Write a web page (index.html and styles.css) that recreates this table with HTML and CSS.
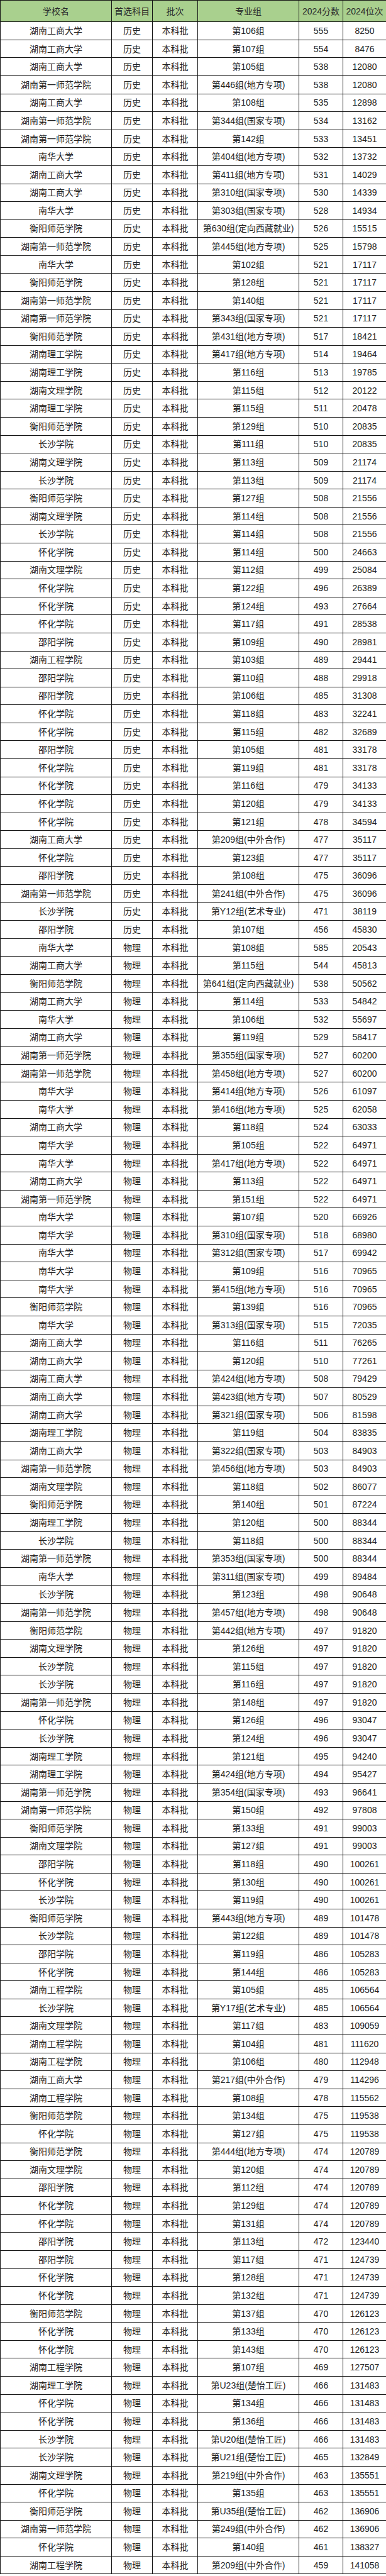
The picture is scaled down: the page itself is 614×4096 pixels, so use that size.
FILE: index.html
```html
<!DOCTYPE html>
<html lang="zh-CN">
<head>
<meta charset="utf-8">
<title>2024 湖南高校录取分数</title>
<link rel="stylesheet" href="styles.css">
</head>
<body>
<table class="score-table">
<colgroup>
<col class="c-school"><col class="c-subject"><col class="c-batch"><col class="c-group"><col class="c-score"><col class="c-rank">
</colgroup>
<thead>
<tr class="head-row"><th>学校名</th><th>首选科目</th><th>批次</th><th>专业组</th><th>2024分数</th><th>2024位次</th></tr>
</thead>
<tbody>
<tr><td>湖南工商大学</td><td>历史</td><td>本科批</td><td>第106组</td><td>555</td><td>8250</td></tr>
<tr><td>湖南工商大学</td><td>历史</td><td>本科批</td><td>第107组</td><td>554</td><td>8476</td></tr>
<tr><td>湖南工商大学</td><td>历史</td><td>本科批</td><td>第105组</td><td>538</td><td>12080</td></tr>
<tr><td>湖南第一师范学院</td><td>历史</td><td>本科批</td><td>第446组(地方专项)</td><td>538</td><td>12080</td></tr>
<tr><td>湖南工商大学</td><td>历史</td><td>本科批</td><td>第108组</td><td>535</td><td>12898</td></tr>
<tr><td>湖南第一师范学院</td><td>历史</td><td>本科批</td><td>第344组(国家专项)</td><td>534</td><td>13162</td></tr>
<tr><td>湖南第一师范学院</td><td>历史</td><td>本科批</td><td>第142组</td><td>533</td><td>13451</td></tr>
<tr><td>南华大学</td><td>历史</td><td>本科批</td><td>第404组(地方专项)</td><td>532</td><td>13732</td></tr>
<tr><td>湖南工商大学</td><td>历史</td><td>本科批</td><td>第411组(地方专项)</td><td>531</td><td>14029</td></tr>
<tr><td>湖南工商大学</td><td>历史</td><td>本科批</td><td>第310组(国家专项)</td><td>530</td><td>14339</td></tr>
<tr><td>南华大学</td><td>历史</td><td>本科批</td><td>第303组(国家专项)</td><td>528</td><td>14934</td></tr>
<tr><td>衡阳师范学院</td><td>历史</td><td>本科批</td><td>第630组(定向西藏就业)</td><td>526</td><td>15515</td></tr>
<tr><td>湖南第一师范学院</td><td>历史</td><td>本科批</td><td>第445组(地方专项)</td><td>525</td><td>15798</td></tr>
<tr><td>南华大学</td><td>历史</td><td>本科批</td><td>第102组</td><td>521</td><td>17117</td></tr>
<tr><td>衡阳师范学院</td><td>历史</td><td>本科批</td><td>第128组</td><td>521</td><td>17117</td></tr>
<tr><td>湖南第一师范学院</td><td>历史</td><td>本科批</td><td>第140组</td><td>521</td><td>17117</td></tr>
<tr><td>湖南第一师范学院</td><td>历史</td><td>本科批</td><td>第343组(国家专项)</td><td>521</td><td>17117</td></tr>
<tr><td>衡阳师范学院</td><td>历史</td><td>本科批</td><td>第431组(地方专项)</td><td>517</td><td>18421</td></tr>
<tr><td>湖南理工学院</td><td>历史</td><td>本科批</td><td>第417组(地方专项)</td><td>514</td><td>19464</td></tr>
<tr><td>湖南理工学院</td><td>历史</td><td>本科批</td><td>第116组</td><td>513</td><td>19785</td></tr>
<tr><td>湖南文理学院</td><td>历史</td><td>本科批</td><td>第115组</td><td>512</td><td>20122</td></tr>
<tr><td>湖南理工学院</td><td>历史</td><td>本科批</td><td>第115组</td><td>511</td><td>20478</td></tr>
<tr><td>衡阳师范学院</td><td>历史</td><td>本科批</td><td>第129组</td><td>510</td><td>20835</td></tr>
<tr><td>长沙学院</td><td>历史</td><td>本科批</td><td>第111组</td><td>510</td><td>20835</td></tr>
<tr><td>湖南文理学院</td><td>历史</td><td>本科批</td><td>第113组</td><td>509</td><td>21174</td></tr>
<tr><td>长沙学院</td><td>历史</td><td>本科批</td><td>第113组</td><td>509</td><td>21174</td></tr>
<tr><td>衡阳师范学院</td><td>历史</td><td>本科批</td><td>第127组</td><td>508</td><td>21556</td></tr>
<tr><td>湖南文理学院</td><td>历史</td><td>本科批</td><td>第114组</td><td>508</td><td>21556</td></tr>
<tr><td>长沙学院</td><td>历史</td><td>本科批</td><td>第114组</td><td>508</td><td>21556</td></tr>
<tr><td>怀化学院</td><td>历史</td><td>本科批</td><td>第114组</td><td>500</td><td>24663</td></tr>
<tr><td>湖南文理学院</td><td>历史</td><td>本科批</td><td>第112组</td><td>499</td><td>25084</td></tr>
<tr><td>怀化学院</td><td>历史</td><td>本科批</td><td>第122组</td><td>496</td><td>26389</td></tr>
<tr><td>怀化学院</td><td>历史</td><td>本科批</td><td>第124组</td><td>493</td><td>27664</td></tr>
<tr><td>怀化学院</td><td>历史</td><td>本科批</td><td>第117组</td><td>491</td><td>28538</td></tr>
<tr><td>邵阳学院</td><td>历史</td><td>本科批</td><td>第109组</td><td>490</td><td>28981</td></tr>
<tr><td>湖南工程学院</td><td>历史</td><td>本科批</td><td>第103组</td><td>489</td><td>29441</td></tr>
<tr><td>邵阳学院</td><td>历史</td><td>本科批</td><td>第110组</td><td>488</td><td>29918</td></tr>
<tr><td>邵阳学院</td><td>历史</td><td>本科批</td><td>第106组</td><td>485</td><td>31308</td></tr>
<tr><td>怀化学院</td><td>历史</td><td>本科批</td><td>第118组</td><td>483</td><td>32241</td></tr>
<tr><td>怀化学院</td><td>历史</td><td>本科批</td><td>第115组</td><td>482</td><td>32689</td></tr>
<tr><td>邵阳学院</td><td>历史</td><td>本科批</td><td>第105组</td><td>481</td><td>33178</td></tr>
<tr><td>怀化学院</td><td>历史</td><td>本科批</td><td>第119组</td><td>481</td><td>33178</td></tr>
<tr><td>怀化学院</td><td>历史</td><td>本科批</td><td>第116组</td><td>479</td><td>34133</td></tr>
<tr><td>怀化学院</td><td>历史</td><td>本科批</td><td>第120组</td><td>479</td><td>34133</td></tr>
<tr><td>怀化学院</td><td>历史</td><td>本科批</td><td>第121组</td><td>478</td><td>34594</td></tr>
<tr><td>湖南工商大学</td><td>历史</td><td>本科批</td><td>第209组(中外合作)</td><td>477</td><td>35117</td></tr>
<tr><td>怀化学院</td><td>历史</td><td>本科批</td><td>第123组</td><td>477</td><td>35117</td></tr>
<tr><td>邵阳学院</td><td>历史</td><td>本科批</td><td>第108组</td><td>475</td><td>36096</td></tr>
<tr><td>湖南第一师范学院</td><td>历史</td><td>本科批</td><td>第241组(中外合作)</td><td>475</td><td>36096</td></tr>
<tr><td>长沙学院</td><td>历史</td><td>本科批</td><td>第Y12组(艺术专业)</td><td>471</td><td>38119</td></tr>
<tr><td>邵阳学院</td><td>历史</td><td>本科批</td><td>第107组</td><td>456</td><td>45830</td></tr>
<tr><td>南华大学</td><td>物理</td><td>本科批</td><td>第108组</td><td>585</td><td>20543</td></tr>
<tr><td>湖南工商大学</td><td>物理</td><td>本科批</td><td>第115组</td><td>544</td><td>45813</td></tr>
<tr><td>衡阳师范学院</td><td>物理</td><td>本科批</td><td>第641组(定向西藏就业)</td><td>538</td><td>50562</td></tr>
<tr><td>湖南工商大学</td><td>物理</td><td>本科批</td><td>第114组</td><td>533</td><td>54842</td></tr>
<tr><td>南华大学</td><td>物理</td><td>本科批</td><td>第106组</td><td>532</td><td>55697</td></tr>
<tr><td>湖南工商大学</td><td>物理</td><td>本科批</td><td>第119组</td><td>529</td><td>58417</td></tr>
<tr><td>湖南第一师范学院</td><td>物理</td><td>本科批</td><td>第355组(国家专项)</td><td>527</td><td>60200</td></tr>
<tr><td>湖南第一师范学院</td><td>物理</td><td>本科批</td><td>第458组(地方专项)</td><td>527</td><td>60200</td></tr>
<tr><td>南华大学</td><td>物理</td><td>本科批</td><td>第414组(地方专项)</td><td>526</td><td>61097</td></tr>
<tr><td>南华大学</td><td>物理</td><td>本科批</td><td>第416组(地方专项)</td><td>525</td><td>62058</td></tr>
<tr><td>湖南工商大学</td><td>物理</td><td>本科批</td><td>第118组</td><td>524</td><td>63033</td></tr>
<tr><td>南华大学</td><td>物理</td><td>本科批</td><td>第105组</td><td>522</td><td>64971</td></tr>
<tr><td>南华大学</td><td>物理</td><td>本科批</td><td>第417组(地方专项)</td><td>522</td><td>64971</td></tr>
<tr><td>湖南工商大学</td><td>物理</td><td>本科批</td><td>第113组</td><td>522</td><td>64971</td></tr>
<tr><td>湖南第一师范学院</td><td>物理</td><td>本科批</td><td>第151组</td><td>522</td><td>64971</td></tr>
<tr><td>南华大学</td><td>物理</td><td>本科批</td><td>第107组</td><td>520</td><td>66926</td></tr>
<tr><td>南华大学</td><td>物理</td><td>本科批</td><td>第310组(国家专项)</td><td>518</td><td>68980</td></tr>
<tr><td>南华大学</td><td>物理</td><td>本科批</td><td>第312组(国家专项)</td><td>517</td><td>69942</td></tr>
<tr><td>南华大学</td><td>物理</td><td>本科批</td><td>第109组</td><td>516</td><td>70965</td></tr>
<tr><td>南华大学</td><td>物理</td><td>本科批</td><td>第415组(地方专项)</td><td>516</td><td>70965</td></tr>
<tr><td>衡阳师范学院</td><td>物理</td><td>本科批</td><td>第139组</td><td>516</td><td>70965</td></tr>
<tr><td>南华大学</td><td>物理</td><td>本科批</td><td>第313组(国家专项)</td><td>515</td><td>72035</td></tr>
<tr><td>湖南工商大学</td><td>物理</td><td>本科批</td><td>第116组</td><td>511</td><td>76265</td></tr>
<tr><td>湖南工商大学</td><td>物理</td><td>本科批</td><td>第120组</td><td>510</td><td>77261</td></tr>
<tr><td>湖南工商大学</td><td>物理</td><td>本科批</td><td>第424组(地方专项)</td><td>508</td><td>79429</td></tr>
<tr><td>湖南工商大学</td><td>物理</td><td>本科批</td><td>第423组(地方专项)</td><td>507</td><td>80529</td></tr>
<tr><td>湖南工商大学</td><td>物理</td><td>本科批</td><td>第321组(国家专项)</td><td>506</td><td>81598</td></tr>
<tr><td>湖南理工学院</td><td>物理</td><td>本科批</td><td>第119组</td><td>504</td><td>83835</td></tr>
<tr><td>湖南工商大学</td><td>物理</td><td>本科批</td><td>第322组(国家专项)</td><td>503</td><td>84903</td></tr>
<tr><td>湖南第一师范学院</td><td>物理</td><td>本科批</td><td>第456组(地方专项)</td><td>503</td><td>84903</td></tr>
<tr><td>湖南文理学院</td><td>物理</td><td>本科批</td><td>第118组</td><td>502</td><td>86077</td></tr>
<tr><td>衡阳师范学院</td><td>物理</td><td>本科批</td><td>第140组</td><td>501</td><td>87224</td></tr>
<tr><td>湖南理工学院</td><td>物理</td><td>本科批</td><td>第120组</td><td>500</td><td>88344</td></tr>
<tr><td>长沙学院</td><td>物理</td><td>本科批</td><td>第118组</td><td>500</td><td>88344</td></tr>
<tr><td>湖南第一师范学院</td><td>物理</td><td>本科批</td><td>第353组(国家专项)</td><td>500</td><td>88344</td></tr>
<tr><td>南华大学</td><td>物理</td><td>本科批</td><td>第311组(国家专项)</td><td>499</td><td>89484</td></tr>
<tr><td>长沙学院</td><td>物理</td><td>本科批</td><td>第123组</td><td>498</td><td>90648</td></tr>
<tr><td>湖南第一师范学院</td><td>物理</td><td>本科批</td><td>第457组(地方专项)</td><td>498</td><td>90648</td></tr>
<tr><td>衡阳师范学院</td><td>物理</td><td>本科批</td><td>第442组(地方专项)</td><td>497</td><td>91820</td></tr>
<tr><td>湖南文理学院</td><td>物理</td><td>本科批</td><td>第126组</td><td>497</td><td>91820</td></tr>
<tr><td>长沙学院</td><td>物理</td><td>本科批</td><td>第115组</td><td>497</td><td>91820</td></tr>
<tr><td>长沙学院</td><td>物理</td><td>本科批</td><td>第116组</td><td>497</td><td>91820</td></tr>
<tr><td>湖南第一师范学院</td><td>物理</td><td>本科批</td><td>第148组</td><td>497</td><td>91820</td></tr>
<tr><td>怀化学院</td><td>物理</td><td>本科批</td><td>第126组</td><td>496</td><td>93047</td></tr>
<tr><td>长沙学院</td><td>物理</td><td>本科批</td><td>第124组</td><td>496</td><td>93047</td></tr>
<tr><td>湖南理工学院</td><td>物理</td><td>本科批</td><td>第121组</td><td>495</td><td>94240</td></tr>
<tr><td>湖南理工学院</td><td>物理</td><td>本科批</td><td>第424组(地方专项)</td><td>494</td><td>95427</td></tr>
<tr><td>湖南第一师范学院</td><td>物理</td><td>本科批</td><td>第354组(国家专项)</td><td>493</td><td>96641</td></tr>
<tr><td>湖南第一师范学院</td><td>物理</td><td>本科批</td><td>第150组</td><td>492</td><td>97808</td></tr>
<tr><td>衡阳师范学院</td><td>物理</td><td>本科批</td><td>第133组</td><td>491</td><td>99003</td></tr>
<tr><td>湖南文理学院</td><td>物理</td><td>本科批</td><td>第127组</td><td>491</td><td>99003</td></tr>
<tr><td>邵阳学院</td><td>物理</td><td>本科批</td><td>第118组</td><td>490</td><td>100261</td></tr>
<tr><td>怀化学院</td><td>物理</td><td>本科批</td><td>第130组</td><td>490</td><td>100261</td></tr>
<tr><td>长沙学院</td><td>物理</td><td>本科批</td><td>第119组</td><td>490</td><td>100261</td></tr>
<tr><td>衡阳师范学院</td><td>物理</td><td>本科批</td><td>第443组(地方专项)</td><td>489</td><td>101478</td></tr>
<tr><td>长沙学院</td><td>物理</td><td>本科批</td><td>第122组</td><td>489</td><td>101478</td></tr>
<tr><td>邵阳学院</td><td>物理</td><td>本科批</td><td>第119组</td><td>486</td><td>105283</td></tr>
<tr><td>怀化学院</td><td>物理</td><td>本科批</td><td>第144组</td><td>486</td><td>105283</td></tr>
<tr><td>湖南工程学院</td><td>物理</td><td>本科批</td><td>第105组</td><td>485</td><td>106564</td></tr>
<tr><td>长沙学院</td><td>物理</td><td>本科批</td><td>第Y17组(艺术专业)</td><td>485</td><td>106564</td></tr>
<tr><td>湖南文理学院</td><td>物理</td><td>本科批</td><td>第117组</td><td>483</td><td>109059</td></tr>
<tr><td>湖南工程学院</td><td>物理</td><td>本科批</td><td>第104组</td><td>481</td><td>111620</td></tr>
<tr><td>湖南工程学院</td><td>物理</td><td>本科批</td><td>第106组</td><td>480</td><td>112948</td></tr>
<tr><td>湖南工商大学</td><td>物理</td><td>本科批</td><td>第217组(中外合作)</td><td>479</td><td>114296</td></tr>
<tr><td>湖南工程学院</td><td>物理</td><td>本科批</td><td>第108组</td><td>478</td><td>115562</td></tr>
<tr><td>衡阳师范学院</td><td>物理</td><td>本科批</td><td>第134组</td><td>475</td><td>119538</td></tr>
<tr><td>怀化学院</td><td>物理</td><td>本科批</td><td>第127组</td><td>475</td><td>119538</td></tr>
<tr><td>衡阳师范学院</td><td>物理</td><td>本科批</td><td>第444组(地方专项)</td><td>474</td><td>120789</td></tr>
<tr><td>湖南文理学院</td><td>物理</td><td>本科批</td><td>第120组</td><td>474</td><td>120789</td></tr>
<tr><td>邵阳学院</td><td>物理</td><td>本科批</td><td>第112组</td><td>474</td><td>120789</td></tr>
<tr><td>怀化学院</td><td>物理</td><td>本科批</td><td>第129组</td><td>474</td><td>120789</td></tr>
<tr><td>怀化学院</td><td>物理</td><td>本科批</td><td>第131组</td><td>474</td><td>120789</td></tr>
<tr><td>邵阳学院</td><td>物理</td><td>本科批</td><td>第113组</td><td>472</td><td>123440</td></tr>
<tr><td>邵阳学院</td><td>物理</td><td>本科批</td><td>第117组</td><td>471</td><td>124739</td></tr>
<tr><td>怀化学院</td><td>物理</td><td>本科批</td><td>第128组</td><td>471</td><td>124739</td></tr>
<tr><td>怀化学院</td><td>物理</td><td>本科批</td><td>第132组</td><td>471</td><td>124739</td></tr>
<tr><td>衡阳师范学院</td><td>物理</td><td>本科批</td><td>第137组</td><td>470</td><td>126123</td></tr>
<tr><td>怀化学院</td><td>物理</td><td>本科批</td><td>第133组</td><td>470</td><td>126123</td></tr>
<tr><td>怀化学院</td><td>物理</td><td>本科批</td><td>第143组</td><td>470</td><td>126123</td></tr>
<tr><td>湖南工程学院</td><td>物理</td><td>本科批</td><td>第107组</td><td>469</td><td>127507</td></tr>
<tr><td>湖南理工学院</td><td>物理</td><td>本科批</td><td>第U23组(楚怡工匠)</td><td>466</td><td>131483</td></tr>
<tr><td>怀化学院</td><td>物理</td><td>本科批</td><td>第134组</td><td>466</td><td>131483</td></tr>
<tr><td>怀化学院</td><td>物理</td><td>本科批</td><td>第136组</td><td>466</td><td>131483</td></tr>
<tr><td>长沙学院</td><td>物理</td><td>本科批</td><td>第U20组(楚怡工匠)</td><td>466</td><td>131483</td></tr>
<tr><td>长沙学院</td><td>物理</td><td>本科批</td><td>第U21组(楚怡工匠)</td><td>465</td><td>132849</td></tr>
<tr><td>湖南文理学院</td><td>物理</td><td>本科批</td><td>第219组(中外合作)</td><td>463</td><td>135551</td></tr>
<tr><td>怀化学院</td><td>物理</td><td>本科批</td><td>第135组</td><td>463</td><td>135551</td></tr>
<tr><td>衡阳师范学院</td><td>物理</td><td>本科批</td><td>第U35组(楚怡工匠)</td><td>462</td><td>136906</td></tr>
<tr><td>湖南第一师范学院</td><td>物理</td><td>本科批</td><td>第249组(中外合作)</td><td>462</td><td>136906</td></tr>
<tr><td>怀化学院</td><td>物理</td><td>本科批</td><td>第140组</td><td>461</td><td>138327</td></tr>
<tr><td>湖南工程学院</td><td>物理</td><td>本科批</td><td>第209组(中外合作)</td><td>459</td><td>141058</td></tr>
</tbody>
</table>
</body>
</html>
```

FILE: styles.css
```css
html, body {
  margin: 0;
  padding: 0;
  background: #ffffff;
}

.score-table {
  width: 614px;
  border-collapse: collapse;
  table-layout: fixed;
  font-family: "Liberation Sans", "Noto Sans CJK SC", sans-serif;
  font-size: 14px;
  color: #222222;
}

.c-school { width: 177px; }
.c-subject { width: 65px; }
.c-batch { width: 72px; }
.c-group { width: 161px; }
.c-score { width: 70px; }
.c-rank { width: 69px; }

.score-table th,
.score-table td {
  border: 1px solid #151515;
  padding: 0;
  text-align: center;
  vertical-align: middle;
  white-space: nowrap;
  font-weight: normal;
  line-height: 1;
}

.head-row {
  height: 34.3px;
}

.head-row th {
  background: #a9d08e;
  color: #2a2a2a;
}

.score-table tbody tr {
  height: 28.59px;
}
```
